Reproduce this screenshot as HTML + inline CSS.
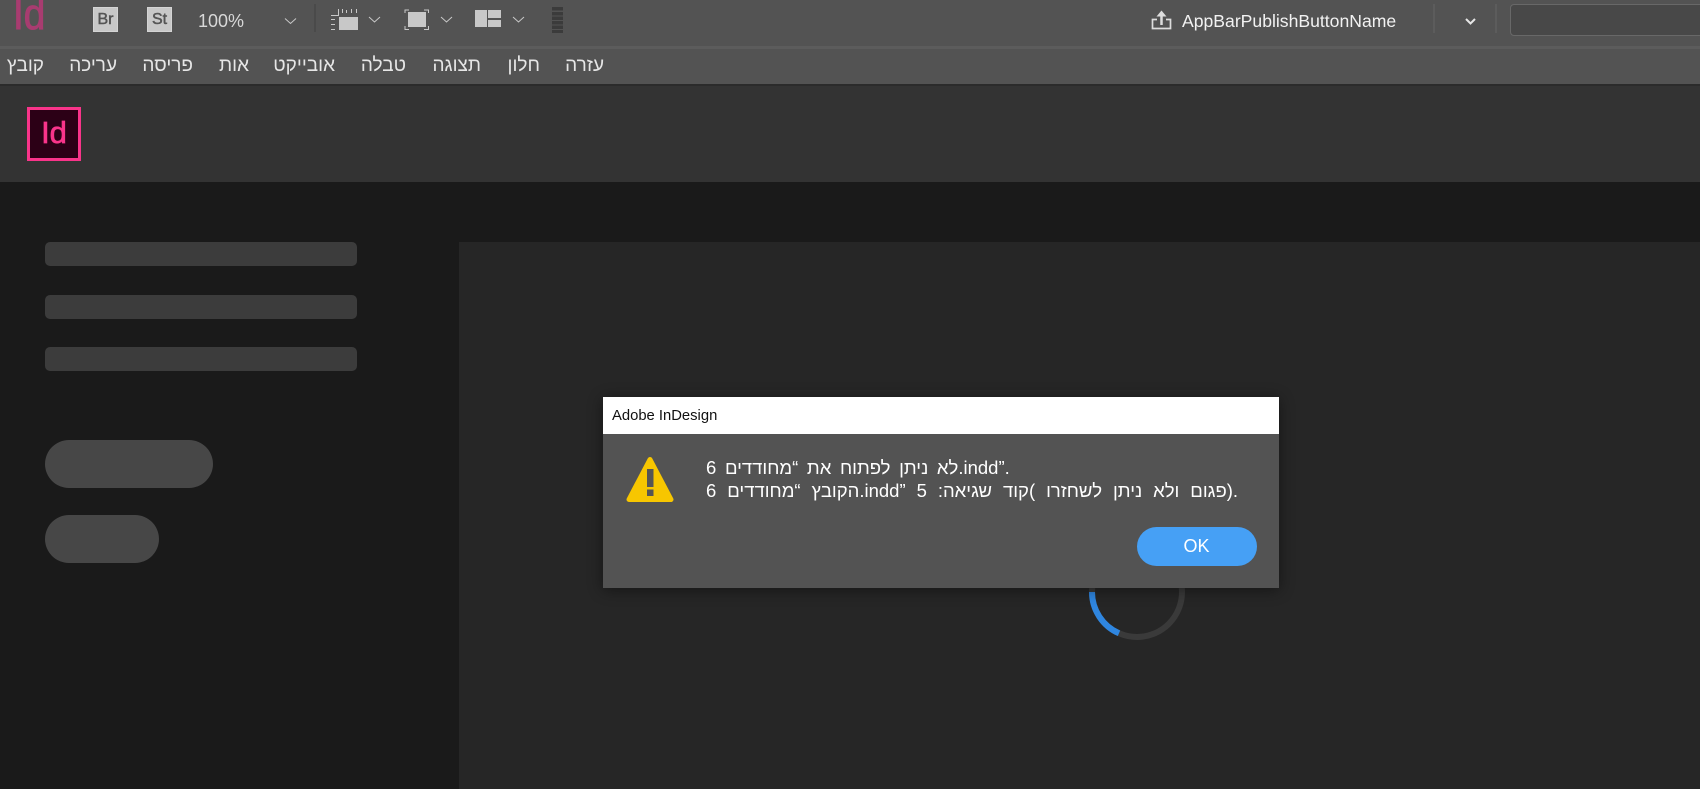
<!DOCTYPE html>
<html><head><meta charset="utf-8"><style>
html,body{margin:0;padding:0;width:1700px;height:789px;overflow:hidden;background:#1a1a1a;font-family:"Liberation Sans","DejaVu Sans",sans-serif}
div,span,svg{position:absolute}
.m{top:54px;font-size:19px;line-height:24px;color:#e6e6e6;white-space:nowrap;direction:rtl;transform:translateX(-100%)}
.bar{left:45px;width:312px;height:24px;background:#3c3c3c;border-radius:5px}
.pill{background:#474747;border-radius:24px;left:45px;height:48px}
.l{left:706px;font-size:18.500px;line-height:23px;color:#fff;white-space:pre;direction:ltr}
.l bdi{direction:rtl;unicode-bidi:isolate}
.b{top:7px;width:25px;height:25px;background:#c8c8c8;color:#555;font-size:16px;line-height:25px;text-align:center;-webkit-text-stroke:.5px #555;box-sizing:border-box;border:1px solid #d4d4d4}
</style></head><body>
<div style="left:0;top:0;width:1700px;height:46px;background:#535353"></div>
<div style="left:0;top:46px;width:1700px;height:3px;background:#5c5c5c"></div>
<div style="left:0;top:49px;width:1700px;height:35px;background:#535353"></div>
<div style="left:0;top:84px;width:1700px;height:2px;background:#2b2b2b"></div>
<div style="left:0;top:86px;width:1700px;height:96px;background:#333"></div>
<div style="left:13px;top:-10px;font-size:44px;line-height:50px;color:#a83c70;-webkit-text-stroke:1px #a83c70;transform:scaleX(.88);transform-origin:0 0">Id</div>
<div class="b" style="left:93px;line-height:23px">Br</div>
<div class="b" style="left:147px;line-height:23px">St</div>
<div style="left:198px;top:9px;font-size:18px;line-height:24px;color:#d8d8d8">100%</div>
<svg style="left:0;top:0" width="1700" height="46" fill="none">
<g stroke="#c8c8c8" stroke-width="1"><path d="M285 18.500l5.500 5 5.500-5M369 17l5.500 5 5.500-5M441 17l5.500 5 5.500-5M513 17l5.500 5 5.500-5"/></g>
<path d="M315 4v28" stroke="#474747" stroke-width="1.500"/>
<g fill="#c8c8c8"><rect x="339" y="17" width="19" height="13"/><rect x="331" y="15" width="7" height="1"/><rect x="338" y="9" width="1" height="7"/>
<rect x="342" y="9" width="1" height="4"/><rect x="346" y="10" width="1" height="3"/><rect x="351" y="9" width="1" height="4"/><rect x="356" y="9" width="1" height="4"/>
<rect x="331" y="19" width="4" height="1"/><rect x="331" y="24" width="4" height="1"/><rect x="331" y="29" width="4" height="1"/>
<rect x="408" y="12" width="18" height="15"/><rect x="475" y="10" width="12" height="17"/><rect x="488" y="10" width="13" height="8"/><rect x="488" y="20" width="13" height="7"/></g>
<path d="M405 13V10h4M424 10h4.500v3M405 26v3.500h4M424 29.500h4.500V26" stroke="#c8c8c8"/>
<g fill="#3b3b3b"><rect x="552" y="7" width="11" height="3.500"/><rect x="552" y="12" width="11" height="3.500"/><rect x="552" y="16.500" width="11" height="3.500"/><rect x="552" y="21" width="11" height="3.500"/><rect x="552" y="25.500" width="11" height="3.500"/><rect x="552" y="30" width="11" height="3"/></g>
<path d="M1157 19.500h-4.500v9h18v-9H1166" stroke="#ddd" stroke-width="1.700"/><path d="M1161.500 25V14" stroke="#ddd" stroke-width="2.500"/><path d="M1156.500 16.500l5-6 5 6z" fill="#ddd"/>
<path d="M1434 4v29M1496 4v29" stroke="#5e5e5e" stroke-width="1.800"/><path d="M1466 19l4.500 4.500 4.500-4.500" stroke="#e6e6e6" stroke-width="2"/>
</svg>
<div style="left:1182px;top:8px;font-size:17.600px;line-height:26px;color:#f2f2f2;white-space:nowrap">AppBarPublishButtonName</div>
<div style="left:1510px;top:4px;width:200px;height:30px;background:#484848;border:1.500px solid #686868;border-radius:4px"></div>
<span class="m" style="left:44px">קובץ</span><span class="m" style="left:117px">עריכה</span><span class="m" style="left:193px">פריסה</span><span class="m" style="left:249px">אות</span><span class="m" style="left:335px">אובייקט</span><span class="m" style="left:406px">טבלה</span><span class="m" style="left:481px">תצוגה</span><span class="m" style="left:540px">חלון</span><span class="m" style="left:604px">עזרה</span>
<div style="left:27px;top:107px;width:48px;height:48px;border:3px solid #f9348a;background:#2c0016;color:#f9348a;font-size:31px;line-height:46px;text-align:center;-webkit-text-stroke:.7px #f9348a">Id</div>
<div class="bar" style="top:242px"></div><div class="bar" style="top:295px"></div><div class="bar" style="top:347px"></div>
<div class="pill" style="top:440px;width:168px"></div><div class="pill" style="top:515px;width:114px"></div>
<div style="left:459px;top:242px;width:1241px;height:547px;background:#262626"></div>
<svg style="left:1080px;top:535px" width="114" height="114" fill="none"><circle cx="57" cy="57" r="45" stroke="#3a3a3a" stroke-width="6"/><path d="M12 57A45 45 0 0 0 39 98.300" stroke="#2f86e0" stroke-width="6"/></svg>
<div style="left:603px;top:397px;width:676px;height:191px;background:#535353;box-shadow:0 2px 14px rgba(0,0,0,.45)"></div>
<div style="left:603px;top:397px;width:676px;height:37px;background:#fff"></div>
<div style="left:612px;top:405px;font-size:14.800px;line-height:22px;color:#111">Adobe InDesign</div>
<svg style="left:620px;top:450px" width="60" height="58"><path d="M30 9.500L51 49.500H9z" fill="#f7c600" stroke="#f7c600" stroke-width="5" stroke-linejoin="round"/><rect x="27" y="19" width="6.500" height="18" fill="#555"/><rect x="27" y="39.500" width="6.500" height="6.500" fill="#555"/></svg>
<div class="l" style="top:456px;word-spacing:3.500px">6 <bdi>לא ניתן לפתוח את “מחודדים</bdi>.indd”.</div>
<div class="l" style="top:479px;word-spacing:5.800px">6 <bdi>הקובץ “מחודדים</bdi>.indd” 5 <bdi>פגום ולא ניתן לשחזרו )קוד שגיאה:</bdi>).</div>
<div style="left:1136.500px;top:527px;width:120px;height:39px;background:#46a0f5;border-radius:20px;color:#fff;font-size:18px;line-height:39px;text-align:center">OK</div>
</body></html>
